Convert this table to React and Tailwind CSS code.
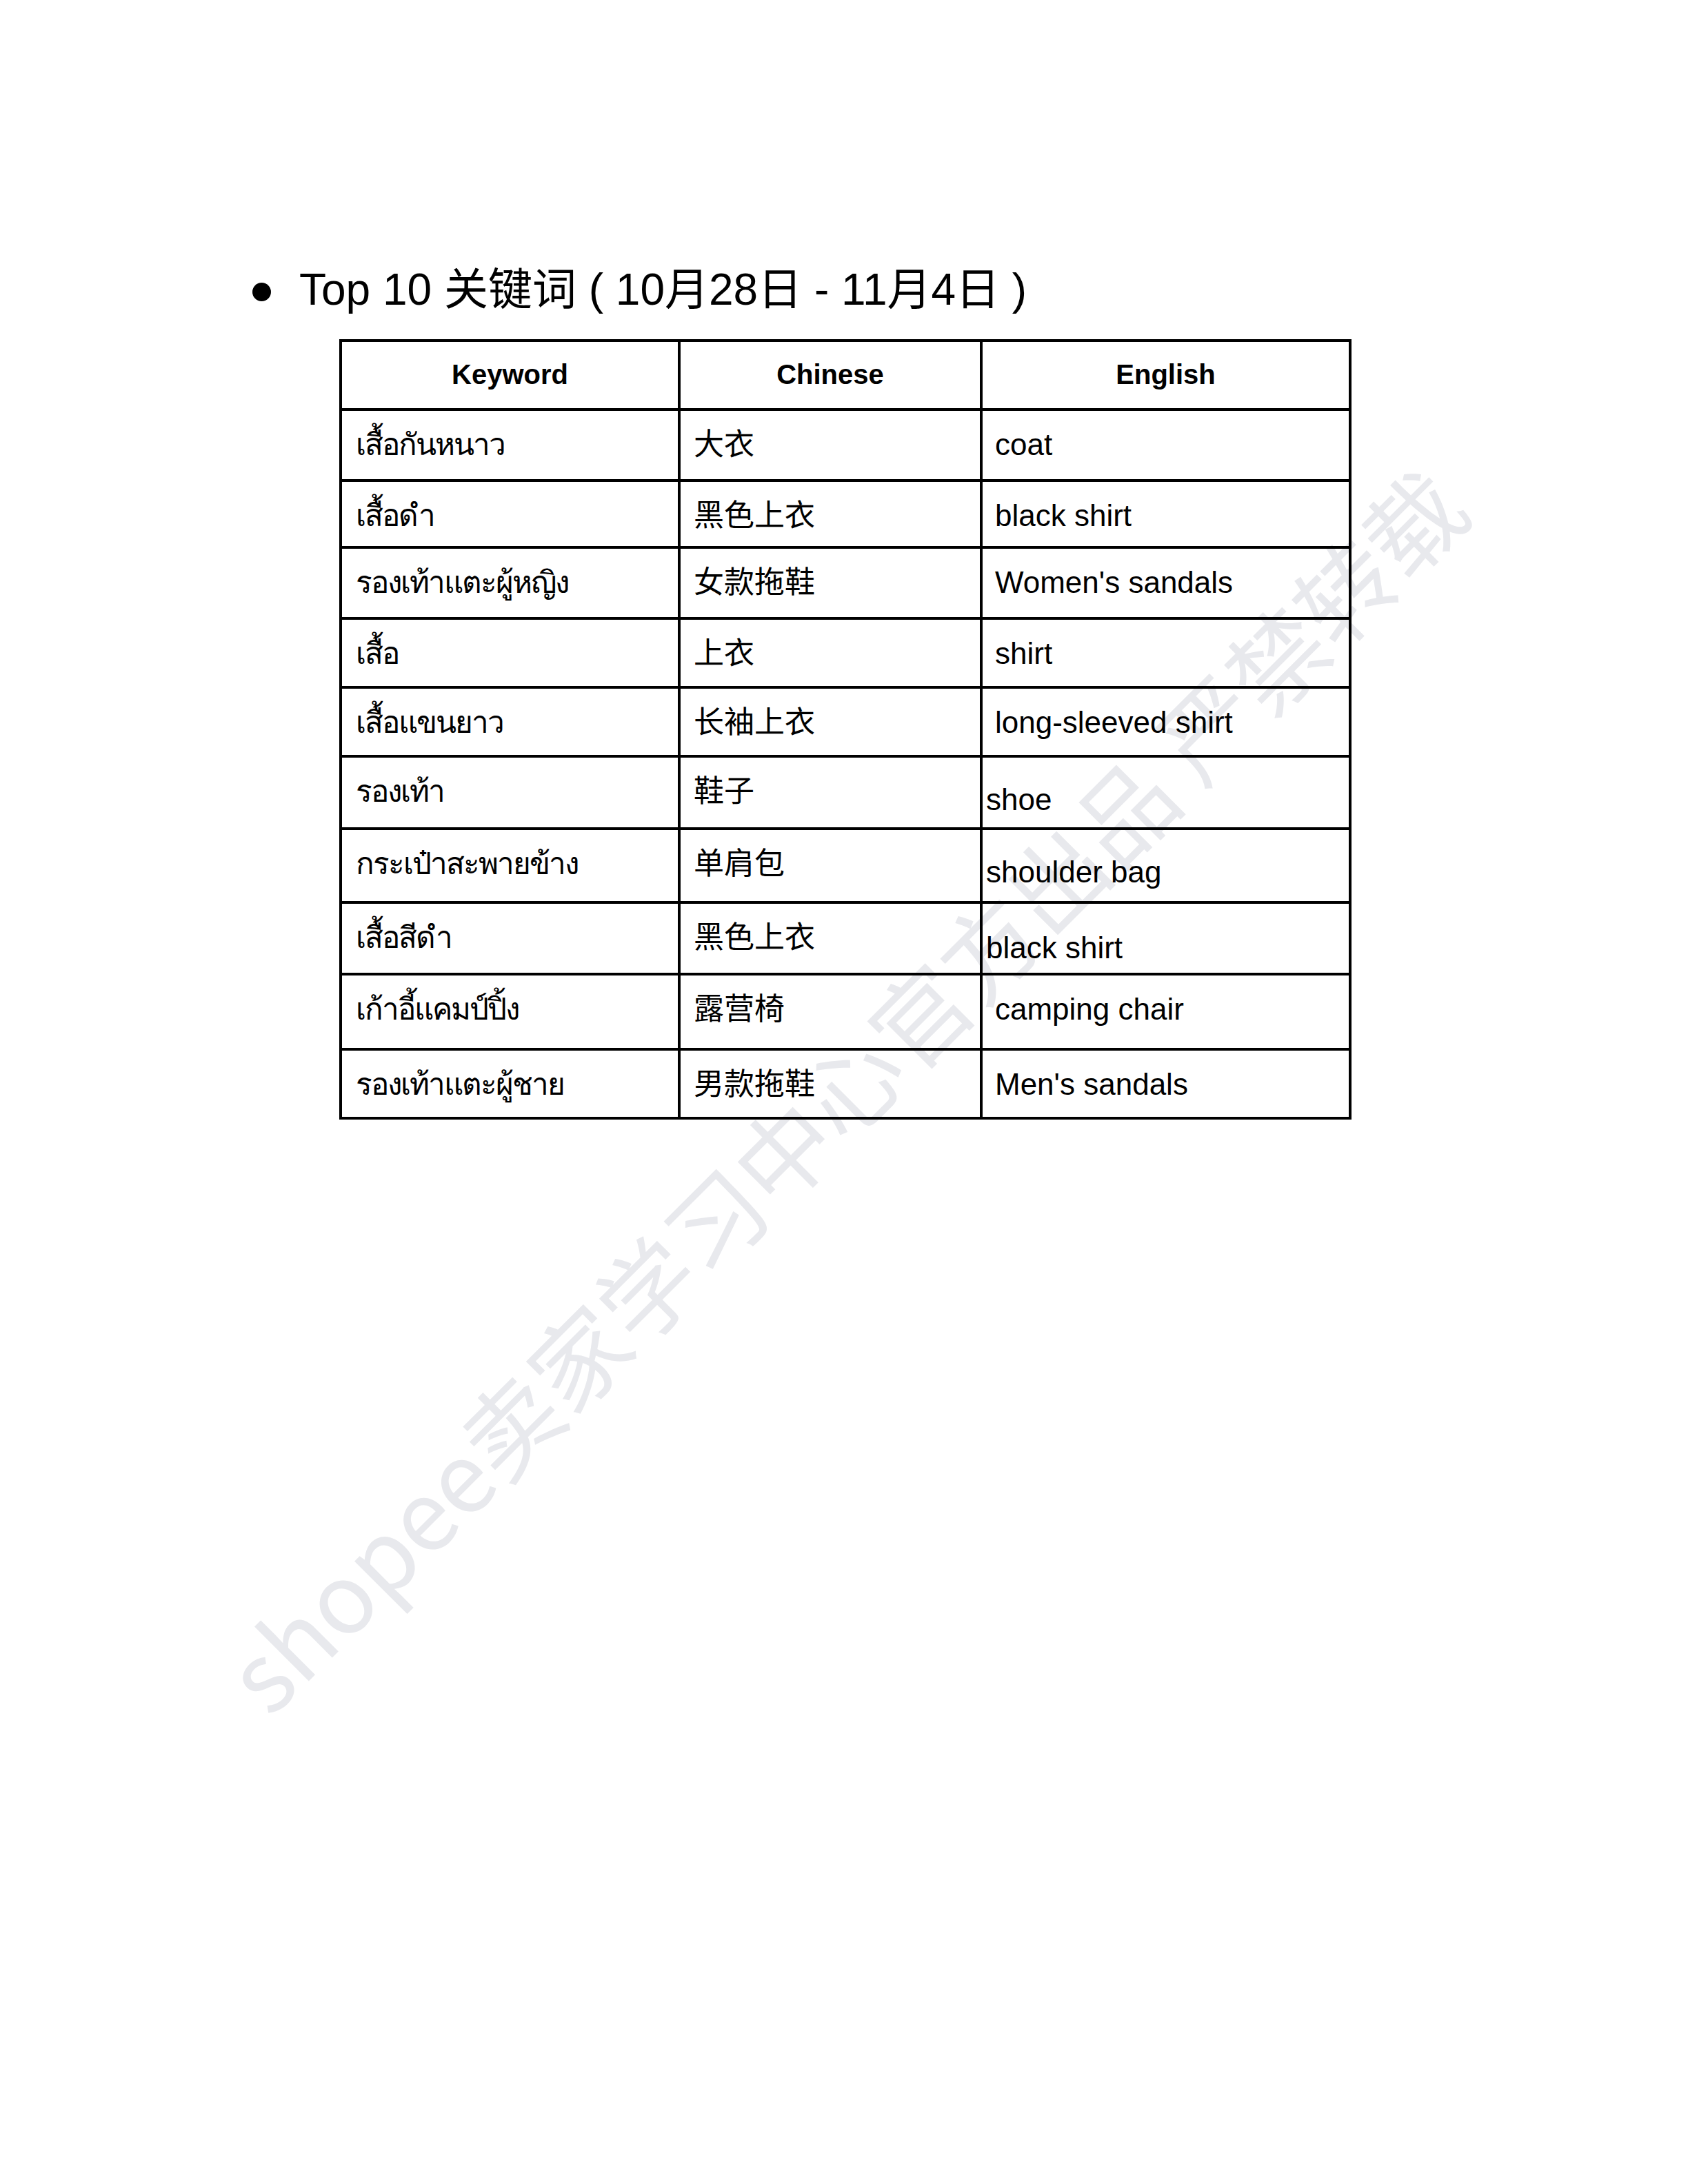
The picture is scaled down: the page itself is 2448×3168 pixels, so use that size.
const rows = [
    { th: 'เสื้อกันหนาว', zh: '大衣', en: 'coat', h: 'h-[103px]', shift: '' },
    { th: 'เสื้อดำ', zh: '黑色上衣', en: 'black shirt', h: 'h-[97px]', shift: '' },
    { th: 'รองเท้าแตะผู้หญิง', zh: '女款拖鞋', en: "Women's sandals", h: 'h-[103px]', shift: '' },
    { th: 'เสื้อ', zh: '上衣', en: 'shirt', h: 'h-[100px]', shift: '' },
    { th: 'เสื้อแขนยาว', zh: '长袖上衣', en: 'long-sleeved shirt', h: 'h-[100px]', shift: '' },
    { th: 'รองเท้า', zh: '鞋子', en: 'shoe', h: 'h-[105px]', shift: 'pt-[36px] pl-[5px]' },
    { th: 'กระเป๋าสะพายข้าง', zh: '单肩包', en: 'shoulder bag', h: 'h-[107px]', shift: 'pt-[36px] pl-[5px]' },
    { th: 'เสื้อสีดำ', zh: '黑色上衣', en: 'black shirt', h: 'h-[104px]', shift: 'pt-[39px] pl-[5px]' },
    { th: 'เก้าอี้แคมป์ปิ้ง', zh: '露营椅', en: 'camping chair', h: 'h-[109px]', shift: '' },
    { th: 'รองเท้าแตะผู้ชาย', zh: '男款拖鞋', en: "Men's sandals", h: 'h-[100px]', shift: '' },
];

const Watermark = () => {
    return (
        <div className="absolute left-[1222px] top-[1578px] -translate-x-1/2 -translate-y-1/2 -rotate-45 whitespace-nowrap pointer-events-none select-none font-['Noto_Sans_CJK_SC',sans-serif] text-[140px] leading-none text-[#e8e9ed]">
            shopee卖家学习中心官方出品 严禁转载
        </div>
    );
};

const KeywordTable = () => {
    return (
        <div className="mt-[35px] ml-[492px] w-[1468px] border-l-4 border-t-4 border-black">
            <div className="flex h-[100px]">
                <div className="w-[491px] border-r-4 border-b-4 border-black pt-[24px] text-center text-[40px] leading-[46px] font-bold">Keyword</div>
                <div className="w-[438px] border-r-4 border-b-4 border-black pt-[24px] text-center text-[40px] leading-[46px] font-bold">Chinese</div>
                <div className="w-[535px] border-r-4 border-b-4 border-black pt-[24px] text-center text-[40px] leading-[46px] font-bold">English</div>
            </div>
            {rows.map((row, i) => (
                <div key={i} className={`flex ${row.h}`}>
                    <div className="w-[491px] border-r-4 border-b-4 border-black pt-[24px] pl-[20px] text-[44px] leading-[50px] tracking-[-2px] whitespace-nowrap">
                        {row.th}
                    </div>
                    <div className="w-[438px] border-r-4 border-b-4 border-black pt-[24px] pl-[19px] text-[44px] leading-[50px] whitespace-nowrap">
                        {row.zh}
                    </div>
                    <div
                        className={`w-[535px] border-r-4 border-b-4 border-black text-[44px] leading-[50px] whitespace-nowrap ${
                            row.shift ? row.shift : 'pt-[24px] pl-[18px]'
                        }`}
                    >
                        {row.en}
                    </div>
                </div>
            ))}
        </div>
    );
};

export default function App() {
    return (
        <div className="relative w-[2448px] h-[3168px] overflow-hidden bg-white text-black font-['Liberation_Sans','Noto_Sans_CJK_SC',sans-serif]">
            <Watermark />
            <div className="relative pt-[383px]">
                <div className="flex items-start pl-[366px]">
                    <span className="mt-[27px] block w-[27px] h-[27px] rounded-full bg-black"></span>
                    <h2 className="ml-[41px] text-[64px] leading-[74px] whitespace-nowrap">
                        Top 10 关键词 ( 10月28日 - 11月4日 )
                    </h2>
                </div>
                <KeywordTable />
            </div>
        </div>
    );
}
